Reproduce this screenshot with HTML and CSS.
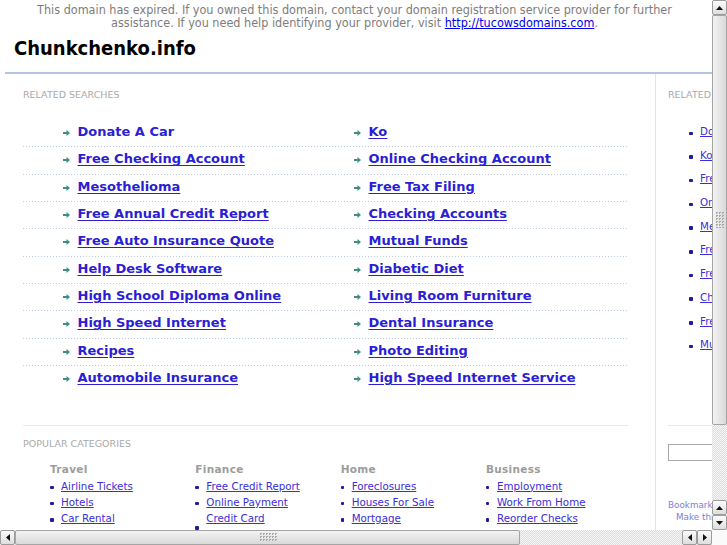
FILE: index.html
```html
<!DOCTYPE html>
<html lang="en">
<head>
<meta charset="utf-8">
<title>Chunkchenko.info</title>
<link rel="stylesheet" href="styles.css">
</head>
<body>
<div class="notice">This domain has expired. If you owned this domain, contact your domain registration service provider for further<br>assistance. If you need help identifying your provider, visit <a href="#">http://tucowsdomains.com</a>.</div>

<div class="page">
  <header class="masthead"><h1>Chunkchenko.info</h1></header>

  <div class="layout">
    <main class="main">
      <div class="label">RELATED SEARCHES</div>
      <ul class="searches">
        <li><svg class="arrow" viewBox="0 0 7 6" width="7" height="6"><path d="M0 2h3.5V0L7 3 3.5 6V4H0z"/></svg><a href="#" class="hover">Donate A Car</a></li>
        <li><svg class="arrow" viewBox="0 0 7 6" width="7" height="6"><path d="M0 2h3.5V0L7 3 3.5 6V4H0z"/></svg><a href="#">Ko</a></li>
        <li><svg class="arrow" viewBox="0 0 7 6" width="7" height="6"><path d="M0 2h3.5V0L7 3 3.5 6V4H0z"/></svg><a href="#">Free Checking Account</a></li>
        <li><svg class="arrow" viewBox="0 0 7 6" width="7" height="6"><path d="M0 2h3.5V0L7 3 3.5 6V4H0z"/></svg><a href="#">Online Checking Account</a></li>
        <li><svg class="arrow" viewBox="0 0 7 6" width="7" height="6"><path d="M0 2h3.5V0L7 3 3.5 6V4H0z"/></svg><a href="#">Mesothelioma</a></li>
        <li><svg class="arrow" viewBox="0 0 7 6" width="7" height="6"><path d="M0 2h3.5V0L7 3 3.5 6V4H0z"/></svg><a href="#">Free Tax Filing</a></li>
        <li><svg class="arrow" viewBox="0 0 7 6" width="7" height="6"><path d="M0 2h3.5V0L7 3 3.5 6V4H0z"/></svg><a href="#">Free Annual Credit Report</a></li>
        <li><svg class="arrow" viewBox="0 0 7 6" width="7" height="6"><path d="M0 2h3.5V0L7 3 3.5 6V4H0z"/></svg><a href="#">Checking Accounts</a></li>
        <li><svg class="arrow" viewBox="0 0 7 6" width="7" height="6"><path d="M0 2h3.5V0L7 3 3.5 6V4H0z"/></svg><a href="#">Free Auto Insurance Quote</a></li>
        <li><svg class="arrow" viewBox="0 0 7 6" width="7" height="6"><path d="M0 2h3.5V0L7 3 3.5 6V4H0z"/></svg><a href="#">Mutual Funds</a></li>
        <li><svg class="arrow" viewBox="0 0 7 6" width="7" height="6"><path d="M0 2h3.5V0L7 3 3.5 6V4H0z"/></svg><a href="#">Help Desk Software</a></li>
        <li><svg class="arrow" viewBox="0 0 7 6" width="7" height="6"><path d="M0 2h3.5V0L7 3 3.5 6V4H0z"/></svg><a href="#">Diabetic Diet</a></li>
        <li><svg class="arrow" viewBox="0 0 7 6" width="7" height="6"><path d="M0 2h3.5V0L7 3 3.5 6V4H0z"/></svg><a href="#">High School Diploma Online</a></li>
        <li><svg class="arrow" viewBox="0 0 7 6" width="7" height="6"><path d="M0 2h3.5V0L7 3 3.5 6V4H0z"/></svg><a href="#">Living Room Furniture</a></li>
        <li><svg class="arrow" viewBox="0 0 7 6" width="7" height="6"><path d="M0 2h3.5V0L7 3 3.5 6V4H0z"/></svg><a href="#">High Speed Internet</a></li>
        <li><svg class="arrow" viewBox="0 0 7 6" width="7" height="6"><path d="M0 2h3.5V0L7 3 3.5 6V4H0z"/></svg><a href="#">Dental Insurance</a></li>
        <li><svg class="arrow" viewBox="0 0 7 6" width="7" height="6"><path d="M0 2h3.5V0L7 3 3.5 6V4H0z"/></svg><a href="#">Recipes</a></li>
        <li><svg class="arrow" viewBox="0 0 7 6" width="7" height="6"><path d="M0 2h3.5V0L7 3 3.5 6V4H0z"/></svg><a href="#">Photo Editing</a></li>
        <li><svg class="arrow" viewBox="0 0 7 6" width="7" height="6"><path d="M0 2h3.5V0L7 3 3.5 6V4H0z"/></svg><a href="#">Automobile Insurance</a></li>
        <li><svg class="arrow" viewBox="0 0 7 6" width="7" height="6"><path d="M0 2h3.5V0L7 3 3.5 6V4H0z"/></svg><a href="#">High Speed Internet Service</a></li>
      </ul>

      <section class="popular">
        <div class="label">POPULAR CATEGORIES</div>
        <div class="cats">
          <div class="cat">
            <h3>Travel</h3>
            <ul>
              <li><span class="dot"></span><a href="#">Airline Tickets</a></li>
              <li><span class="dot"></span><a href="#">Hotels</a></li>
              <li><span class="dot"></span><a href="#">Car Rental</a></li>
              <li><span class="dot"></span><a href="#">Vacations</a></li>
            </ul>
          </div>
          <div class="cat">
            <h3>Finance</h3>
            <ul>
              <li><span class="dot"></span><a href="#">Free Credit Report</a></li>
              <li><span class="dot"></span><a href="#">Online Payment</a></li>
              <li><span class="dot"></span><a href="#">Credit Card Applications</a></li>
            </ul>
          </div>
          <div class="cat">
            <h3>Home</h3>
            <ul>
              <li><span class="dot"></span><a href="#">Foreclosures</a></li>
              <li><span class="dot"></span><a href="#">Houses For Sale</a></li>
              <li><span class="dot"></span><a href="#">Mortgage</a></li>
              <li><span class="dot"></span><a href="#">Home Equity Loans</a></li>
            </ul>
          </div>
          <div class="cat">
            <h3>Business</h3>
            <ul>
              <li><span class="dot"></span><a href="#">Employment</a></li>
              <li><span class="dot"></span><a href="#">Work From Home</a></li>
              <li><span class="dot"></span><a href="#">Reorder Checks</a></li>
              <li><span class="dot"></span><a href="#">Small Business</a></li>
            </ul>
          </div>
        </div>
      </section>
    </main>

    <aside class="side">
      <div class="label">RELATED SEARCHES</div>
      <ul class="side-list">
        <li><span class="dot"></span><a href="#">Donate A Car</a></li>
        <li><span class="dot"></span><a href="#">Ko</a></li>
        <li><span class="dot"></span><a href="#">Free Checking Account</a></li>
        <li><span class="dot"></span><a href="#">Online Checking Account</a></li>
        <li><span class="dot"></span><a href="#">Mesothelioma</a></li>
        <li><span class="dot"></span><a href="#">Free Tax Filing</a></li>
        <li><span class="dot"></span><a href="#">Free Annual Credit Report</a></li>
        <li><span class="dot"></span><a href="#">Checking Accounts</a></li>
        <li><span class="dot"></span><a href="#">Free Auto Insurance Quote</a></li>
        <li><span class="dot"></span><a href="#">Mutual Funds</a></li>
      </ul>
      <div class="search-box"><input type="text" aria-label="Search"></div>
      <div class="bookmark">
        <a href="#">Bookmark this page</a>
        <a href="#" class="home">Make this your homepage</a>
      </div>
    </aside>
  </div>
</div>

<div class="vscroll">
  <div class="sb-btn"><svg viewBox="0 0 7 4" width="7" height="4"><path d="M0 4L3.5 0 7 4z"/></svg></div>
  <div class="sb-thumb v"><span class="grip v"></span></div>
  <div class="sb-track"></div>
  <div class="sb-btn"><svg viewBox="0 0 7 4" width="7" height="4"><path d="M0 4L3.5 0 7 4z"/></svg></div>
  <div class="sb-btn"><svg viewBox="0 0 7 4" width="7" height="4"><path d="M0 0h7L3.5 4z"/></svg></div>
</div>
<div class="hscroll">
  <div class="sb-btn"><svg viewBox="0 0 4 7" width="4" height="7"><path d="M4 0v7L0 3.5z"/></svg></div>
  <div class="sb-thumb h"><span class="grip h"></span></div>
  <div class="sb-track"></div>
  <div class="sb-btn"><svg viewBox="0 0 4 7" width="4" height="7"><path d="M4 0v7L0 3.5z"/></svg></div>
  <div class="sb-btn"><svg viewBox="0 0 4 7" width="4" height="7"><path d="M0 0v7l4-3.5z"/></svg></div>
</div>
<div class="sb-corner"></div>
</body>
</html>
```
FILE: styles.css
```css
html, body {
  margin: 0;
  padding: 0;
  overflow: hidden;
  background: #fff;
}
body {
  font-family: "DejaVu Sans", Verdana, sans-serif;
  color: #333;
}
ul { list-style: none; margin: 0; padding: 0; }

/* notice */
.notice {
  width: 709px;
  padding-top: 3px;
  text-align: center;
  font: 12.5px/13px "DejaVu Sans Condensed", "DejaVu Sans", sans-serif;
  color: #7d7d7d;
}
.notice a { color: #0000ee; }

/* page */
.page {
  margin-left: 5px;
  width: 940px;
}
.masthead {
  padding: 7px 0 12px 9px;
  border-bottom: 2px solid #b4c4e5;
}
.masthead h1 {
  margin: 0;
  font: bold 20px/24px "DejaVu Sans Condensed", "DejaVu Sans", sans-serif;
  color: #000;
}

.layout {
  display: flex;
  align-items: stretch;
}
.label {
  font-size: 9.5px;
  line-height: 12px;
  color: #a9a9a9;
}

/* main column */
.main {
  width: 650px;
  box-sizing: border-box;
  padding: 15px 27px 0 18px;
}
.searches {
  margin-top: 18px;
  display: grid;
  grid-template-columns: 291px 1fr;
}
.searches li {
  display: flex;
  align-items: center;
  gap: 8px;
  padding: 6px 0 8px 39.5px;
  height: 13.33px;
  line-height: 13.33px;
  background-image: linear-gradient(to right, #bccbe8 1px, transparent 1px);
  background-size: 3px 1px;
  background-repeat: repeat-x;
  background-position: 0 0;
}
.searches li:nth-child(-n+2) { background: none; }
.searches a {
  font-weight: bold;
  font-size: 13px;
  color: #2b1ed3;
  text-underline-offset: 2px;
}
.searches a.hover { text-decoration: none; }
.arrow {
  fill: #3f8d85;
  margin-top: 3px;
  flex: none;
}

.popular {
  margin-top: 33px;
  border-top: 1px solid #e3eaf4;
  padding-top: 12px;
}
.cats {
  margin: 11px 0 0 27px;
  display: grid;
  grid-template-columns: repeat(4, 145.33px);
}
.cat h3 {
  margin: 0;
  font-size: 10.5px;
  line-height: 16.33px;
  font-weight: bold;
  color: #9c9c9c;
  letter-spacing: 0.3px;
}
.cat li, .side-list li {
  display: flex;
  align-items: center;
  gap: 7.5px;
  line-height: 16.33px;
}
.cat a, .side-list a {
  font-size: 10.3px;
  color: #3a2ed8;
  width: 122px;
  text-underline-offset: 1px;
}
.dot {
  flex: none;
  width: 3.5px;
  height: 3.5px;
  border-radius: 1px;
  background: #1f1a9e;
  margin-top: 3px;
}

/* sidebar */
.side {
  flex: 1;
  border-left: 1px solid #dde5f1;
  padding: 15px 0 0 12px;
}
.side-list {
  margin-top: 19px;
  padding-left: 21px;
}
.side-list li {
  height: 23.7px;
  line-height: 23.7px;
}
.side-list a { width: auto; }
.search-box {
  margin-top: 68px;
  border-top: 1px solid #e3eaf4;
  padding-top: 18px;
}
.search-box input {
  display: block;
  box-sizing: border-box;
  width: 150px;
  height: 17px;
  margin: 0;
  border: 1px solid #a9a9a9;
  background: #fff;
}
.bookmark {
  margin-top: 38px;
  font: 8.8px/12px "DejaVu Sans", sans-serif;
}
.bookmark a {
  display: block;
  color: #7b7ed6;
  text-decoration: none;
}
.bookmark a.home { padding-left: 8px; }

/* fake browser scrollbars (overlay the page) */
.vscroll, .hscroll {
  position: fixed;
  display: flex;
  background: repeating-conic-gradient(#dedede 0 25%, #f5f5f5 0 50%) 0 0 / 2px 2px;
}
.vscroll {
  right: 0;
  top: 0;
  width: 15px;
  height: 530px;
  flex-direction: column;
}
.hscroll {
  left: 0;
  bottom: 0;
  width: 712px;
  height: 15px;
}
.sb-corner {
  position: fixed;
  right: 0;
  bottom: 0;
  width: 15px;
  height: 15px;
  background: #fafafa;
}
.sb-btn {
  flex: none;
  width: 15px;
  height: 15px;
  box-sizing: border-box;
  border: 1px solid #9c9c9c;
  border-radius: 2px;
  background: linear-gradient(#fbfbfb, #dedede);
  display: flex;
  align-items: center;
  justify-content: center;
}
.sb-btn svg { fill: #111; }
.sb-track { flex: 1; }
.sb-thumb {
  flex: none;
  box-sizing: border-box;
  border: 1px solid #a5a5a5;
  border-radius: 2px;
  display: flex;
  align-items: center;
  justify-content: center;
}
.sb-thumb.v {
  height: 410px;
  background: linear-gradient(to right, #f3f3f3, #d9d9d9);
}
.sb-thumb.h {
  width: 505px;
  background: linear-gradient(#f3f3f3, #d9d9d9);
}
.grip {
  background: repeating-conic-gradient(#a8a8a8 0 25%, transparent 0 100%) 0 0 / 3px 3px;
}
.grip.v { width: 9px; height: 16px; }
.grip.h { width: 18px; height: 9px; }
```
